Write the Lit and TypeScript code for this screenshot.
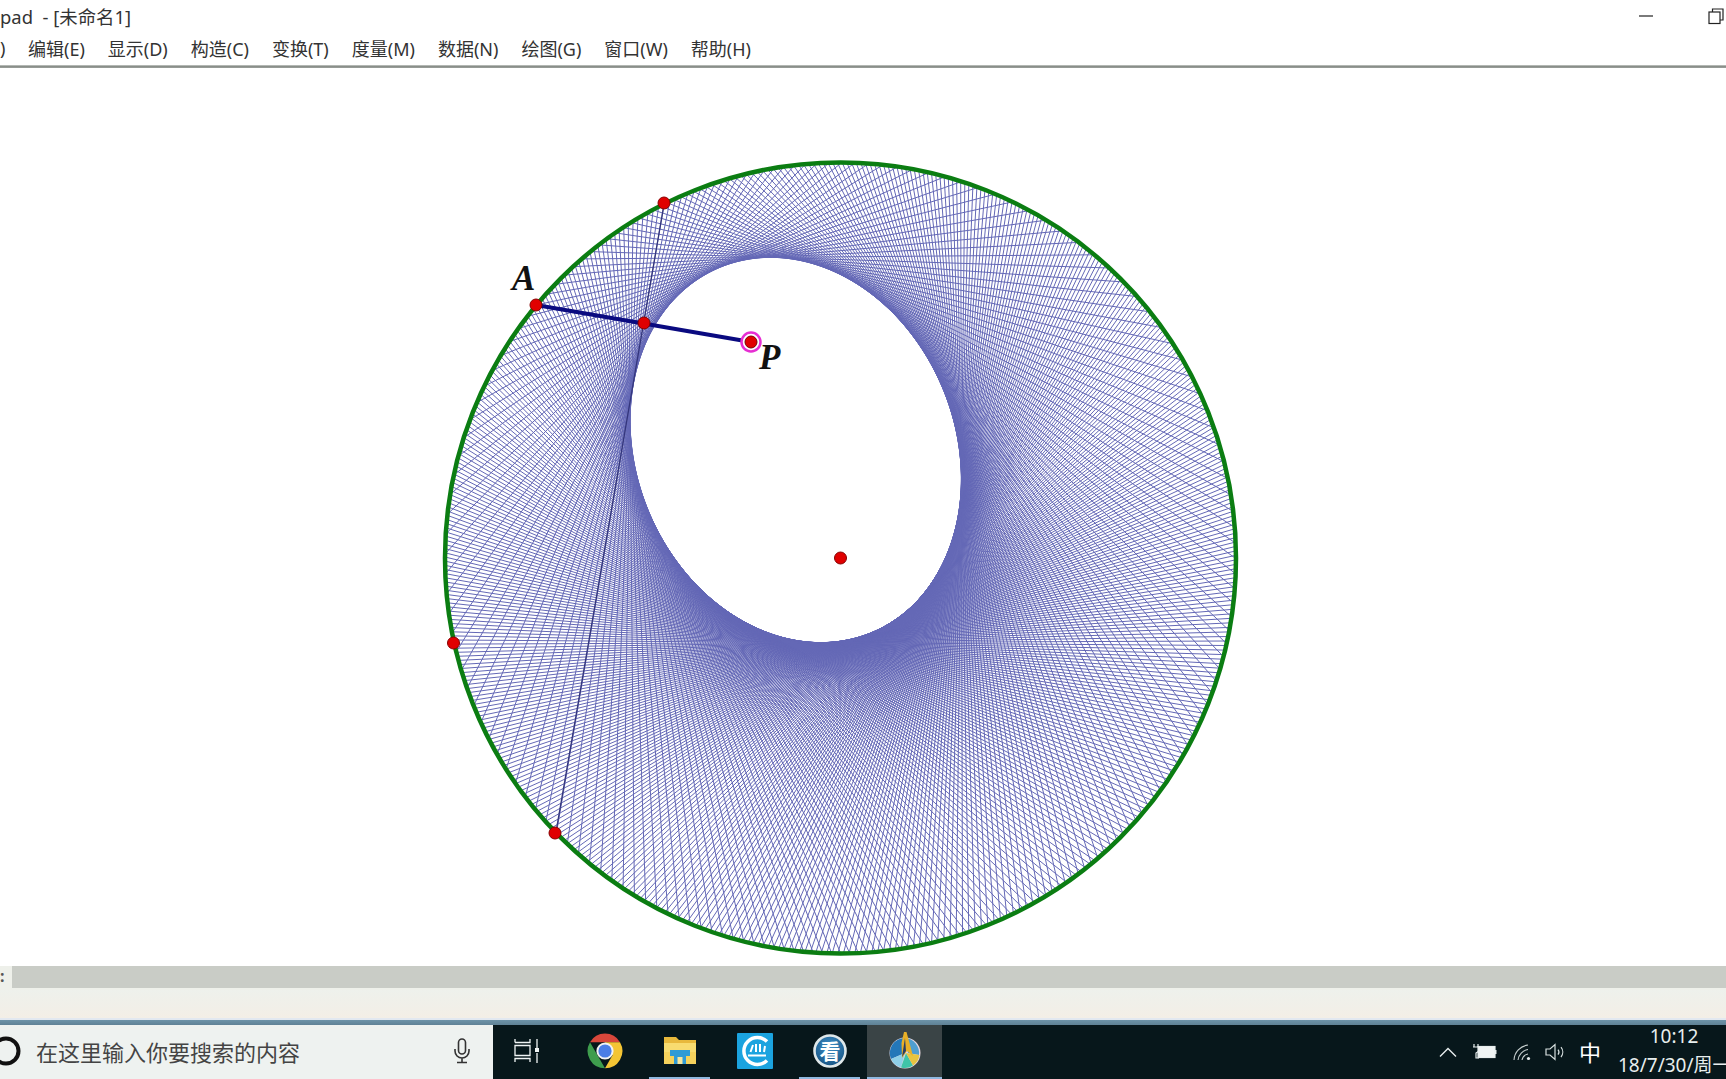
import { LitElement, html, css, svg } from 'lit';
import { customElement } from 'lit/decorators.js';

// Geometry of the sketch, in page pixels
const O = { x: 840.5, y: 558 };
const R = 395.5;
const P = { x: 751, y: 342 };
const A = { x: 536, y: 305 };
const LINES = 360;

// Perpendicular bisector of AP, cut down to a chord of the circle
function chord(ax: number, ay: number) {
  const mx = (ax + P.x) / 2;
  const my = (ay + P.y) / 2;
  let dx = -(ay - P.y);
  let dy = ax - P.x;
  const len = Math.hypot(dx, dy);
  dx /= len;
  dy /= len;
  const fx = mx - O.x;
  const fy = my - O.y;
  const b = fx * dx + fy * dy;
  const c = fx * fx + fy * fy - R * R;
  const s = Math.sqrt(b * b - c);
  return [mx + dx * (-b - s), my + dy * (-b - s), mx + dx * (-b + s), my + dy * (-b + s)];
}

function meshPath() {
  const start = Math.atan2(A.y - O.y, A.x - O.x);
  let d = '';
  for (let i = 0; i < LINES; i++) {
    const t = start + (i / LINES) * Math.PI * 2;
    const [x1, y1, x2, y2] = chord(O.x + R * Math.cos(t), O.y + R * Math.sin(t));
    d += `M${x1.toFixed(1)} ${y1.toFixed(1)}L${x2.toFixed(1)} ${y2.toFixed(1)}`;
  }
  return d;
}

const MENU = ['编辑(E)', '显示(D)', '构造(C)', '变换(T)', '度量(M)', '数据(N)', '绘图(G)', '窗口(W)', '帮助(H)'];
const POINTS = [
  [664, 203],
  [453.5, 643],
  [555, 833],
  [840.5, 558],
  [644, 323],
  [536, 305],
];

@customElement('app-root')
export class AppRoot extends LitElement {
  static override styles = css`
    :host {
      display: flex;
      flex-direction: column;
      width: 1726px;
      height: 1079px;
      overflow: hidden;
      background: #fff;
      font-family: 'Noto Sans', 'Noto Sans CJK SC', sans-serif;
      color: #222;
    }
    .title {
      height: 32px;
      flex: none;
      display: flex;
      align-items: center;
      font-size: 18.4px;
      white-space: pre;
      color: #333;
    }
    .win-btns {
      margin-left: auto;
      display: flex;
      align-items: center;
      gap: 54px;
      padding-right: 2px;
    }
    .win-btns svg {
      display: block;
    }
    .menu {
      height: 33px;
      flex: none;
      box-sizing: border-box;
      padding-bottom: 2px;
      display: flex;
      align-items: center;
      gap: 23px;
      font-size: 18px;
      white-space: nowrap;
      color: #333;
    }
    .menu span:first-child {
      width: 5px;
    }
    .rule {
      height: 3px;
      flex: none;
      background: linear-gradient(#c8ccc8, #7d827d 60%, #a8aca8);
    }
    .canvas {
      flex: 1;
      min-height: 0;
    }
    .canvas svg {
      display: block;
    }
    .mesh {
      filter: blur(0.45px);
    }
    .pt-label {
      font-family: 'Liberation Serif', serif;
      font-weight: bold;
      font-style: italic;
      font-size: 35px;
      fill: #111;
    }
    .hscroll {
      height: 24px;
      flex: none;
      display: flex;
      background: #eef0ea;
      padding-bottom: 2px;
      box-sizing: border-box;
    }
    .hscroll b {
      width: 12px;
      font-size: 16px;
      line-height: 20px;
      color: #555;
    }
    .hscroll div {
      flex: 1;
      background: #c9ccc6;
    }
    .status {
      height: 28px;
      flex: none;
      background: linear-gradient(#eef1ec, #f3eee6);
    }
    .edge {
      height: 7px;
      flex: none;
      background: linear-gradient(#e2e8f0 28%, #6d93a8 28%, #5f8296);
    }
    .taskbar {
      height: 54px;
      flex: none;
      display: flex;
      background: #07171b;
      white-space: nowrap;
    }
    .search {
      width: 493px;
      flex: none;
      display: flex;
      align-items: center;
      background: #eef2f0;
      font-size: 22px;
      color: #444;
      box-sizing: border-box;
      padding-bottom: 2px;
    }
    .search svg {
      display: block;
      flex: none;
    }
    .search .ring {
      margin-left: -9px;
      margin-right: 15px;
    }
    .search .mic {
      margin-left: auto;
      margin-right: 22px;
    }
    .tile {
      width: 75px;
      flex: none;
      display: flex;
      flex-direction: column;
    }
    .tile.view {
      width: 68px;
      margin-right: 6px;
    }
    .tile.active {
      background: #3a4446;
    }
    .tile .icon {
      flex: 1;
      display: flex;
      align-items: center;
      justify-content: center;
    }
    .tile .mark {
      height: 2px;
      margin: 0 7px;
    }
    .tile.open .mark {
      background: #8fb8e0;
    }
    .tile.active .mark {
      margin: 0;
      background: #8fb8e0;
    }
    .tray {
      display: flex;
      align-items: center;
      margin-left: 497px;
      color: #e8eeee;
    }
    .tray svg {
      display: block;
      flex: none;
    }
    .ime {
      font-size: 22px;
      line-height: 24px;
      width: 22px;
      margin-left: 14px;
      color: #fff;
    }
    .clock {
      width: 112px;
      margin-left: 17px;
      text-align: center;
      font-size: 19px;
      line-height: 26px;
    }
    .clock div:first-child {
      height: 24px;
      line-height: 18px;
    }
    .clock div:last-child {
      height: 26px;
      line-height: 28px;
    }
  `;

  private renderSketch() {
    const [x1, y1, x2, y2] = chord(A.x, A.y);
    return svg`
      <path class="mesh" d=${meshPath()} fill="none" stroke="#6468b6" stroke-width="1" />
      <line class="mesh" x1=${x1} y1=${y1} x2=${x2} y2=${y2} stroke="#34367c" stroke-width="1.3" />
      <circle cx=${O.x} cy=${O.y} r=${R} fill="none" stroke="#0b7d12" stroke-width="4.5" />
      <line x1=${A.x} y1=${A.y} x2=${P.x} y2=${P.y} stroke="#0a0a80" stroke-width="4" />
      <circle cx=${P.x} cy=${P.y} r="9.5" fill="#fff" stroke="#e62ed2" stroke-width="2.5" />
      <circle cx=${P.x} cy=${P.y} r="6" fill="#e00000" stroke="#700" stroke-width="1" />
      ${POINTS.map(
        ([x, y]) => svg`<circle cx=${x} cy=${y} r="6" fill="#e00000" stroke="#800" stroke-width="1" />`
      )}
      <text class="pt-label" x="512" y="290">A</text>
      <text class="pt-label" x="759" y="369">P</text>
    `;
  }

  private chromeIcon() {
    return html`<svg width="36" height="36" viewBox="-18 -18 36 36">
      <path d="M-15 -8.7A17.3 17.3 0 0 1 15 -8.7L0 -8.7Z" fill="#d8473b" />
      <path d="M-15 -8.7L-7.5 4.3L0 17.3A17.3 17.3 0 0 1 -15 -8.7Z" fill="#3e9d4d" />
      <path d="M15 -8.7A17.3 17.3 0 0 1 0 17.3L7.5 4.3L0 -8.7Z" fill="#f4c534" />
      <circle r="8.6" fill="#f2f2f2" />
      <circle r="6.6" fill="#4a7de6" />
    </svg>`;
  }

  private explorerIcon() {
    return html`<svg width="34" height="30" viewBox="0 0 34 30">
      <path d="M1 1H13L16 4H33V10H1Z" fill="#e8b93c" />
      <rect x="1" y="7" width="32" height="21" fill="#f8dc70" />
      <rect x="1" y="16" width="32" height="12" fill="#f5d25c" />
      <path d="M7 14H27V20H23V28H11V20H7Z" fill="#2f9bd6" />
      <rect x="14.5" y="21" width="5" height="7" fill="#f5e6a0" />
    </svg>`;
  }

  private cIcon() {
    return html`<svg width="36" height="36" viewBox="0 0 36 36">
      <rect width="36" height="36" rx="1" fill="#1ba3df" />
      <path d="M30 8.5A13.5 13.5 0 1 0 30 27.5" fill="none" stroke="#fff" stroke-width="3.5" />
      <rect x="11" y="21.5" width="18" height="2" fill="#fff" />
      <path d="M13.5 19L16 12M19 19V11M23 19V11M27 19L28 13" stroke="#fff" stroke-width="2" fill="none" />
    </svg>`;
  }

  private kanIcon() {
    return html`<svg width="36" height="36" viewBox="-18 -18 36 36">
      <defs>
        <radialGradient id="kan" cx="0.5" cy="0.35" r="0.7">
          <stop offset="0" stop-color="#3f8fc8" />
          <stop offset="1" stop-color="#14507f" />
        </radialGradient>
      </defs>
      <circle r="15.5" fill="url(#kan)" stroke="#dfe8ea" stroke-width="2.6" />
      <text
        x="0"
        y="7.5"
        text-anchor="middle"
        font-size="21"
        font-weight="700"
        fill="#fff"
        font-family="'Noto Sans CJK SC', sans-serif"
      >
        看
      </text>
    </svg>`;
  }

  private sketchpadIcon() {
    return html`<svg width="34" height="40" viewBox="0 0 34 40">
      <circle cx="17" cy="22" r="15.5" fill="#e8d8e0" />
      <path d="M17 7A15 15 0 0 0 3 28L17 22Z" fill="#2477b8" />
      <path d="M17 7A15 15 0 0 1 31 24L20 22Z" fill="#4f9ed0" />
      <path d="M3 28A15 15 0 0 0 13 36.5L17 22Z" fill="#8fd0e8" />
      <path d="M13 36.5A15 15 0 0 0 25 34.5L18 22Z" fill="#3fc4a8" />
      <path d="M25 34.5A15 15 0 0 0 31.5 24L18 22Z" fill="#e8c440" />
      <path d="M16 1L18.5 1L25 25L19 20L14 27L13.5 12Z" fill="#e8b028" />
      <path d="M17 7L18 20L14 26Z" fill="#2a3e66" />
    </svg>`;
  }

  override render() {
    return html`
      <div class="title">
        <span>pad  - [未命名1]</span>
        <div class="win-btns">
          <svg width="16" height="32" viewBox="0 0 16 32">
            <line x1="1" y1="16" x2="15" y2="16" stroke="#222" stroke-width="1.2" />
          </svg>
          <svg width="16" height="32" viewBox="0 0 16 32" fill="none" stroke="#222" stroke-width="1.2">
            <rect x="1" y="12" width="11" height="11.5" />
            <path d="M4.5 12V9H15V20H12" />
          </svg>
        </div>
      </div>
      <div class="menu">
        <span>)</span>
        ${MENU.map((m) => html`<span>${m}</span>`)}
      </div>
      <div class="rule"></div>
      <div class="canvas">
        <svg width="1726" height="897" viewBox="0 68 1726 897">${this.renderSketch()}</svg>
      </div>
      <div class="hscroll">
        <b>:</b>
        <div></div>
      </div>
      <div class="status"></div>
      <div class="edge"></div>
      <div class="taskbar">
        <div class="search">
          <svg class="ring" width="30" height="30" viewBox="0 0 30 30">
            <circle cx="15" cy="15" r="12.5" fill="none" stroke="#111" stroke-width="4" />
          </svg>
          <span>在这里输入你要搜索的内容</span>
          <svg class="mic" width="18" height="26" viewBox="0 0 18 26" fill="none" stroke="#333" stroke-width="1.6">
            <rect x="5.5" y="1" width="7" height="15" rx="3.5" />
            <path d="M2 11V13A7 7 0 0 0 16 13V11M9 20V24M4 24.5H14" />
          </svg>
        </div>
        <div class="tile view">
          <div class="icon">
            <svg width="26" height="26" viewBox="0 0 26 26" fill="none" stroke="#f0f4f4" stroke-width="1.3">
              <path d="M1 4.5H16V1M1 4.5V1M1 7.5H16V17.5H1ZM1 24V20.5H16V24M23 1V10M23 15V25" />
              <rect x="21" y="10" width="4" height="4" fill="#f0f4f4" stroke="none" />
            </svg>
          </div>
          <div class="mark"></div>
        </div>
        <div class="tile">
          <div class="icon">${this.chromeIcon()}</div>
          <div class="mark"></div>
        </div>
        <div class="tile open">
          <div class="icon">${this.explorerIcon()}</div>
          <div class="mark"></div>
        </div>
        <div class="tile">
          <div class="icon">${this.cIcon()}</div>
          <div class="mark"></div>
        </div>
        <div class="tile open">
          <div class="icon">${this.kanIcon()}</div>
          <div class="mark"></div>
        </div>
        <div class="tile active open">
          <div class="icon">${this.sketchpadIcon()}</div>
          <div class="mark"></div>
        </div>
        <div class="tray">
          <svg width="18" height="10" viewBox="0 0 18 10" fill="none" stroke="#e8eeee" stroke-width="1.4">
            <path d="M1 9.5L9 1.5L17 9.5" />
          </svg>
          <svg style="margin-left:16px" width="24" height="16" viewBox="0 0 24 16" fill="none" stroke="#e8eeee" stroke-width="1.2">
            <path d="M1 0V3M5 0V3M0 3H6V7L3 9V14H6" />
            <rect x="5" y="2.5" width="17" height="11" fill="#f0f4f4" />
            <rect x="22" y="6" width="1.5" height="4" fill="#e8eeee" stroke="none" />
          </svg>
          <svg style="margin-left:16px" width="18" height="18" viewBox="0 0 18 18" fill="none" stroke="#c8d0d0" stroke-width="1.1">
            <path d="M1 17A16 16 0 0 1 15 2M5 17A12 12 0 0 1 15 6.5M9 17A7.5 7.5 0 0 1 15 11" />
            <circle cx="15.5" cy="15.5" r="1.6" fill="#e8eeee" stroke="none" />
          </svg>
          <svg style="margin-left:14px" width="20" height="18" viewBox="0 0 20 18" fill="none" stroke="#d8e0e0" stroke-width="1.2">
            <path d="M1 6H5L10 1.5V16.5L5 12H1Z" />
            <path d="M13 6.5A4 4 0 0 1 13 11.5M16 4A8 8 0 0 1 16 14" />
          </svg>
          <span class="ime">中</span>
          <div class="clock">
            <div>10:12</div>
            <div>18/7/30/周一</div>
          </div>
        </div>
      </div>
    `;
  }
}
